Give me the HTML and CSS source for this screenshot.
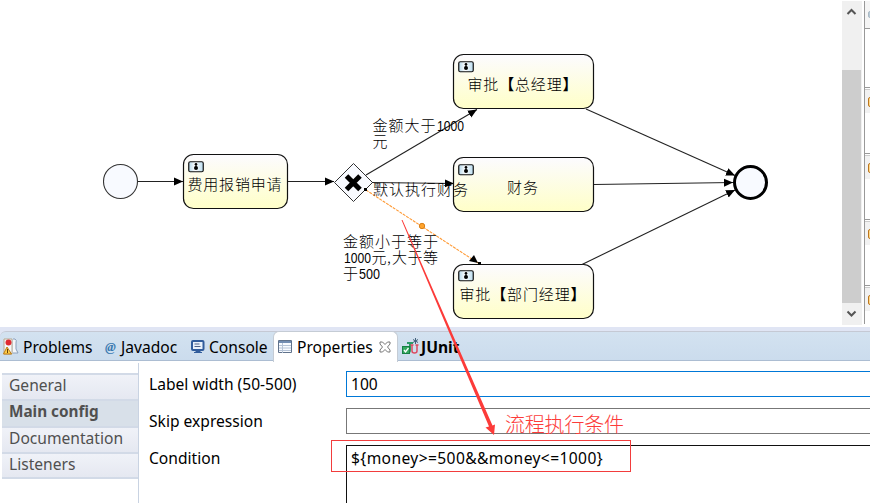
FILE: index.html
```html
<!DOCTYPE html>
<html lang="zh">
<head>
<meta charset="utf-8">
<title>Process editor</title>
<link rel="stylesheet" href="styles.css">
</head>
<body>
<div class="app">
  <div class="editor">
    <svg class="canvas" width="842" height="326" viewBox="0 0 842 326">
      <defs>
        <linearGradient id="task" x1="0" y1="0" x2="0" y2="1"><stop offset="0" stop-color="#fcfbff"/><stop offset="1" stop-color="#ffffc8"/></linearGradient>
        <linearGradient id="badge"><stop offset="0" stop-color="#b4d6e9"/><stop offset=".45" stop-color="#fff"/><stop offset="1" stop-color="#b9dcef"/></linearGradient>
        <marker id="arrow" markerUnits="userSpaceOnUse" markerWidth="10" markerHeight="9" refX="9" refY="4.5" orient="auto"><path d="M0 .5 9 4.5 0 8.5Z"/></marker>
        <g id="user"><rect x=".75" y=".75" width="14.5" height="10" rx="1.5" fill="url(#badge)" stroke="#111" stroke-width="1.2"/><circle cx="8" cy="3.300" r="1.300"/><ellipse cx="8" cy="6.900" rx="2" ry="2"/><path d="M7.500 3h1v3h-1Z"/></g>
      </defs>
      <circle class="event" cx="120.5" cy="181.5" r="17"/>
      <circle class="event end" cx="750.5" cy="182.5" r="16"/>
      <g class="task">
        <rect x="183.5" y="154.500" width="104" height="54" rx="10"/>
        <rect x="453.500" y="54.500" width="140" height="54" rx="10"/>
        <rect x="453.500" y="157.500" width="140" height="54" rx="10"/>
        <rect x="453.500" y="264.500" width="140" height="54" rx="10"/>
      </g>
      <use href="#user" x="188" y="161"/><use href="#user" x="458" y="61"/><use href="#user" x="458" y="164"/><use href="#user" x="458" y="270"/>
      <path class="gateway" d="M353.500 163.500 372.500 182.500 353.500 201.500 334.500 182.500Z"/>
      <path class="cross" d="m346.500 176 13.500 13.500m0-13.500-13.500 13.500"/>
      <g class="flow">
        <path d="M138 181.500H183"/><path d="M288 181.500H334"/>
        <path d="M366 175 477 109.500"/><path d="M372 182.500 454 183.500"/>
        <path d="M586 109 735 175.500"/><path d="M594 184.500 733 182.500"/><path d="M582 264.500 735 190"/>
      </g>
      <path class="selected" d="M366 190 478 263"/>
      <path d="m478 263-9-2 5-6Z"/>
      <rect x="364" y="188" width="3" height="3"/><rect x="478" y="262" width="3" height="3"/>
      <circle cx="422" cy="226" r="2.700" fill="#ffa32b" stroke="#d98019"/>
      <g class="label">
        <text x="187.500" y="189.500" textLength="94">费用报销申请</text>
        <text x="467.500" y="89.500" textLength="110">审批<tspan class="bracket">【</tspan>总经理<tspan class="bracket">】</tspan></text>
        <text x="507" y="192.500" textLength="31">财务</text>
        <text x="459.500" y="299.500" textLength="126">审批<tspan class="bracket">【</tspan>部门经理<tspan class="bracket">】</tspan></text>
        <text x="372.500" y="131" textLength="63">金额大于</text><text class="num" x="437" y="131" textLength="27" lengthAdjust="spacingAndGlyphs">1000</text>
        <text x="372.500" y="147">元</text>
        <text x="373" y="194.500" textLength="95">默认执行财务</text>
        <text x="343" y="247" textLength="95">金额小于等于</text>
        <text class="num" x="344" y="263" textLength="27" lengthAdjust="spacingAndGlyphs">1000</text><text x="371.500" y="263">元</text><text x="387" y="263">,</text><text x="392" y="263" textLength="46">大于等</text>
        <text x="343" y="279">于</text><text class="num" x="359" y="279" textLength="21" lengthAdjust="spacingAndGlyphs">500</text>
      </g>
    </svg>
    <div class="scrollbar">
      <svg width="19" height="24" viewBox="0 0 19 24"><path d="m5.500 13 4-4 4 4"/></svg>
      <div class="thumb"></div>
      <svg width="19" height="22" viewBox="0 0 19 22"><path d="m5.500 8.500 4 4 4-4"/></svg>
    </div>
    <div class="palette">
      <div class="drawer first"><i></i></div>
      <div class="drawer"><i></i></div>
      <div class="drawer"><i></i></div>
      <div class="drawer"><i></i></div>
      <div class="drawer last"><i></i></div>
    </div>
  </div>
  <div class="views">
    <div class="tabs">
      <div class="tab problems"><svg width="16" height="18" viewBox="0 0 16 18"><path d="M1 1h8v15H1z" fill="#f4f7fb" stroke="#b8a98e"/><path d="M10 1h2q2 1 1 4-1 7 2 10h-5" fill="#f5f7fb" stroke="#8ba0bc"/><circle cx="5.500" cy="4.500" r="3" fill="#e02b32"/><path d="M4 9 .5 16h8Z" fill="#ffcf4a" stroke="#bd7b16"/><path d="M4.500 11v4" stroke="#664009"/></svg><span>Problems</span></div>
      <div class="tab javadoc"><b class="at">@</b><span>Javadoc</span></div>
      <div class="tab console"><svg width="14" height="14" viewBox="0 0 14 14"><rect x="1" y="1" width="11.500" height="9" rx="1" fill="#e9f2fc" stroke="#315d9c" stroke-width="2"/><path d="M3.500 4h5m-5 2.500h6" stroke="#4e6288"/><path d="M5 10h4v2H5zM3 12.500h8" fill="#315d9c" stroke="#315d9c"/></svg><span>Console</span></div>
      <div class="tab active"><svg width="14" height="14" viewBox="0 0 14 14"><path d="M.5.500h13v12H.5z" fill="#f8fbff" stroke="#60728b"/><path d="M1 2h12" stroke="#728db2" stroke-width="2"/><path d="M4.500 3v10M1 5.500h12M1 8h12M1 10.500h12" stroke="#b6c4d7"/></svg><span>Properties</span><svg class="close" width="12" height="12" viewBox="0 0 12 12"><path d="M1 1h2.500L6 3.500 8.500 1H11v2L8.500 6 11 9v2H8.500L6 8.500 3.500 11H1V9l2.500-3L1 3Z" fill="#fff" stroke="#777"/></svg></div>
      <div class="tab junit"><svg width="17" height="18" viewBox="0 0 17 18"><path d="M5 5h6M8 5v7q0 3-3 3" fill="none" stroke="#2c9b68" stroke-width="2"/><path d="M10 7v6q0 2 2.500 2T15 13V7M8.500 7h3m2 0h3" fill="none" stroke="#dd4c61" stroke-width="1.500"/><path d="M13.500 0v6M11 1.500l5 3m0-3-5 3" stroke="#42627c"/><rect x=".5" y="8.500" width="7" height="7" fill="#35a961" stroke="#168044"/><path d="m2 12 1.500 2 3-4" fill="none" stroke="#fff" stroke-width="1.300"/></svg><b>JUnit</b></div>
    </div>
    <div class="content">
      <div class="nav">
        <div class="item">General</div><div class="item on">Main config</div><div class="item">Documentation</div><div class="item">Listeners</div>
      </div>
      <div class="form">
        <div class="name">Label width (50-500)</div><div class="field focus">100</div>
        <div class="name">Skip expression</div><div class="field"></div>
        <div class="name">Condition</div><div class="field area">${money&gt;=500&amp;&amp;money&lt;=1000}</div>
      </div>
    </div>
  </div>
  <svg class="notes" width="870" height="503" viewBox="0 0 870 503">
    <path d="M401.500 220H402.500L492.500 425.500 495 424.500 494 435 485.500 427.500 489 426.500Z" fill="#fc3b39"/>
    <rect x="331.500" y="440.500" width="299" height="31" fill="none" stroke="#f23d3d"/>
    <text x="505" y="432" textLength="119">流程执行条件</text>
  </svg>
</div>
</body>
</html>
```
FILE: styles.css
```css
* { box-sizing: border-box; }
body { margin: 0; background: #fff; color: #000; font: 15.6px "Noto Sans", "Open Sans", sans-serif; }
.app { position: relative; width: 870px; height: 503px; overflow: hidden; display: flex; flex-direction: column; }
.editor { display: flex; height: 327px; flex: none; }
.canvas { display: block; flex: none; }
.task rect { fill: url(#task); stroke: #111; stroke-width: 1.2; }
.event { fill: #f8faff; stroke: #333; stroke-width: 1.1; }
.event.end { stroke: #000; stroke-width: 3; }
.gateway { fill: #f8faff; stroke: #333; }
.cross { stroke: #000; stroke-width: 5; fill: none; }
.flow path { stroke: #222; stroke-width: 1.1; fill: none; marker-end: url(#arrow); }
.selected { stroke: #ff9a35; stroke-width: 1.1; stroke-dasharray: 3 1; fill: none; }
.label { font: 300 15px "Noto Sans CJK SC", sans-serif; }
.label .bracket { font-weight: 900; }
.label .num { font: 15px "Liberation Sans", sans-serif; }
.scrollbar { width: 20px; height: 324px; margin-top: 1px; background: #f0f0f0; display: flex; flex-direction: column; justify-content: space-between; flex: none; }
.scrollbar path { stroke: #555; stroke-width: 2; fill: none; }
.thumb { width: 19px; height: 233px; margin-top: 45px; margin-bottom: 0; background: #cdcdcd; }
.palette { width: 6px; height: 323px; margin: 1px 0 0 2px; border-left: 1px solid #999; overflow: hidden; }
.drawer { height: 66px; border-top: 1px solid #999; background: linear-gradient(#fff 1px, #ccc 1px 2px, #f2f2f2 2px 25px, #fff 25px); padding: 9px 0 0 3px; }
.drawer i { display: block; width: 6px; height: 10px; border: 1px solid #bd7720; border-radius: 2px; background: #ffd98c; }
.drawer.first { height: 86px; border: 0; background: linear-gradient(#f5f5f5 27px, #999 27px 28px, #fff 28px); }
.drawer.first i { border-color: #aab9c4; background: #b9cbd8; height: 7px; margin-top: 1px; }
.views { flex: 1; background: #e0e5f4; padding-top: 4px; }
.tabs { height: 30px; border-top: 1px solid #c5c9d4; border-bottom: 1px solid #acbdd2; border-radius: 6px 0 0 0; background: linear-gradient(#d3e2f0, #cbdced); display: flex; }
.tab { display: flex; align-items: center; height: 29px; white-space: nowrap; flex: none; }
.tab svg { flex: none; display: block; }
.problems { width: 105px; padding-left: 3px; gap: 4px; }
.javadoc { width: 86px; gap: 4px; }
.at { font: italic bold 13px "Liberation Serif", serif; color: #3979b0; width: 12px; }
.console { width: 82px; gap: 4px; }
.active { width: 125px; background: #fff; border: 1px solid #c5ccd5; border-bottom: 0; border-radius: 6px 6px 0 0; padding: 0 0 0 4px; margin-top: -1px; height: 31px; gap: 5px; }
.close { margin-left: 1px; }
.junit { gap: 2px; padding-left: 4px; }
.content { height: 142px; background: #fff; display: flex; padding-top: 2px; }
.nav { width: 139px; padding: 10px 0 0 2px; border-right: 1px solid #c9d3e2; flex: none; color: #505050; }
.item { height: 26.3px; border-top: 2px solid #d2dae7; background: linear-gradient(#f0f2f8, #e5e8f1); padding-left: 7px; line-height: 21px; }
.item.on { background: #d8e0e9; font-weight: bold; font-size: 15.3px; }
.item:last-child { border-bottom: 2px solid #d2dae7; height: 27px; }
.form { flex: 1; display: grid; grid-template-columns: 197px 1fr; grid-template-rows: 26px 26px 70px; row-gap: 11px; padding: 8px 0 0 10px; }
.name { height: 26px; line-height: 26px; }
.field { border: 1px solid #777; border-right: 0; padding-left: 4px; line-height: 24px; height: 26px; }
.field.focus { border-color: #0078d7; }
.field.area { height: 70px; border-color: #111; border-bottom: 0; letter-spacing: .39px; }
.notes { position: absolute; left: 0; top: 0; pointer-events: none; }
.notes text { font: 300 20px "Noto Sans CJK SC", sans-serif; fill: #fc3b39; }
```
